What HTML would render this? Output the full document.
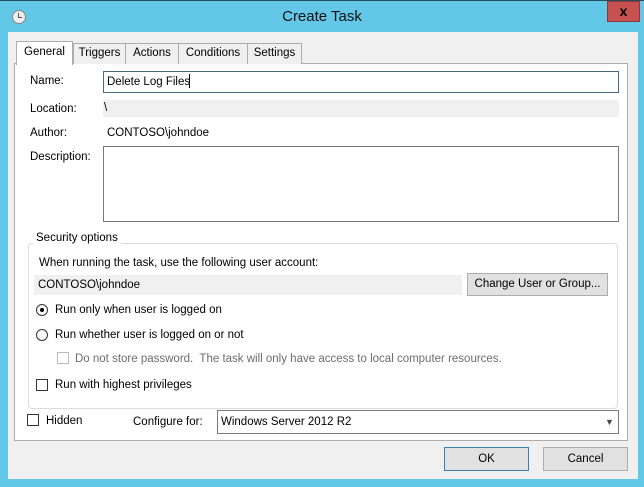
<!DOCTYPE html>
<html><head><style>
*{margin:0;padding:0;box-sizing:border-box}
body{width:644px;height:487px;background:#63c7e8;position:relative;overflow:hidden;font-family:"Liberation Sans",sans-serif;font-size:11.5px;color:#000}
.a{position:absolute}
.t{position:absolute;white-space:nowrap;line-height:14px}
.tab{position:absolute;top:43px;height:21px;border:1px solid #adadad;border-bottom:none;background:#f0f0f0;text-align:center;line-height:19px}
.cb{position:absolute;width:12px;height:12px;border:1px solid #333;background:#fff}
.rd{position:absolute;width:12px;height:12px;border:1px solid #333;border-radius:50%;background:#fff}
.btn{position:absolute;background:#e1e1e1;border:1px solid #adadad;text-align:center}
</style></head><body>
<div class="a" style="left:0;top:0;width:644px;height:1px;background:#2b4a5a"></div>
<div class="a" style="left:12px;top:10px;width:14px;height:14px;border-radius:50%;background:#eee;border:1px solid #888"></div>
<div class="a" style="left:18px;top:13px;width:1px;height:5px;background:#555"></div>
<div class="a" style="left:18px;top:17px;width:4px;height:1px;background:#555"></div>
<div class="t" style="left:0;width:644px;text-align:center;top:8px;font-size:15px;line-height:18px;color:#111">Create Task</div>
<div class="a" style="left:607px;top:1px;width:33px;height:21px;background:#c75050;border:1px solid #8a3a3a;color:#000;font-weight:bold;text-align:center;line-height:18px;font-size:14px">x</div>
<div class="a" style="left:8px;top:32px;width:630px;height:447px;background:#f0f0f0"></div>
<div class="a" style="left:14px;top:63px;width:614px;height:378px;background:#fff;border:1px solid #adadad"></div>
<div class="tab" style="left:73px;width:53px">Triggers</div>
<div class="tab" style="left:125px;width:54px">Actions</div>
<div class="tab" style="left:178px;width:70px">Conditions</div>
<div class="tab" style="left:247px;width:55px">Settings</div>
<div class="tab" style="left:16px;top:41px;height:24px;width:57px;background:#fff;line-height:20px;z-index:2">General</div>
<div class="t" style="left:30px;top:74px">Name:</div>
<div class="a" style="left:103px;top:71px;width:516px;height:22px;border:1px solid #4a6a80;background:#fff"></div>
<div class="t" style="left:107px;top:75px">Delete Log Files</div>
<div class="a" style="left:189px;top:74px;width:1px;height:14px;background:#000"></div>
<div class="t" style="left:30px;top:102px">Location:</div>
<div class="a" style="left:103px;top:100px;width:516px;height:17px;background:#f0f0f0"></div>
<div class="t" style="left:104px;top:101px">\</div>
<div class="t" style="left:30px;top:126px">Author:</div>
<div class="t" style="left:107px;top:126px">CONTOSO\johndoe</div>
<div class="t" style="left:30px;top:150px">Description:</div>
<div class="a" style="left:103px;top:146px;width:516px;height:76px;border:1px solid #7a7a7a;background:#fff"></div>
<div class="a" style="left:28px;top:243px;width:590px;height:166px;border:1px solid #dcdcdc;border-radius:4px"></div>
<div class="t" style="left:33px;top:231px;background:#fff;padding:0 3px">Security options</div>
<div class="t" style="left:39px;top:256px">When running the task, use the following user account:</div>
<div class="a" style="left:34px;top:275px;width:428px;height:20px;background:#f0f0f0"></div>
<div class="t" style="left:38px;top:278px">CONTOSO\johndoe</div>
<div class="btn" style="left:467px;top:273px;width:141px;height:23px;line-height:21px">Change User or Group...</div>
<div class="rd" style="left:36px;top:304px"></div>
<div class="a" style="left:40px;top:308px;width:4px;height:4px;border-radius:50%;background:#000"></div>
<div class="t" style="left:55px;top:303px">Run only when user is logged on</div>
<div class="rd" style="left:36px;top:329px"></div>
<div class="t" style="left:55px;top:328px">Run whether user is logged on or not</div>
<div class="cb" style="left:57px;top:352px;border-color:#bcbcbc"></div>
<div class="t" style="left:75px;top:352px;color:#6d6d6d">Do not store password.&nbsp; The task will only have access to local computer resources.</div>
<div class="cb" style="left:36px;top:379px"></div>
<div class="t" style="left:55px;top:378px">Run with highest privileges</div>
<div class="cb" style="left:27px;top:414px"></div>
<div class="t" style="left:46px;top:414px">Hidden</div>
<div class="t" style="left:133px;top:415px">Configure for:</div>
<div class="a" style="left:217px;top:410px;width:402px;height:24px;border:1px solid #7a7a7a;background:#fff"></div>
<div class="t" style="left:221px;top:415px">Windows Server 2012 R2</div>
<div class="t" style="left:605px;top:415px;font-size:9px;color:#444">&#9660;</div>
<div class="btn" style="left:444px;top:447px;width:85px;height:24px;line-height:22px;border-color:#3c7fb1">OK</div>
<div class="btn" style="left:543px;top:447px;width:85px;height:24px;line-height:22px">Cancel</div>
</body></html>
